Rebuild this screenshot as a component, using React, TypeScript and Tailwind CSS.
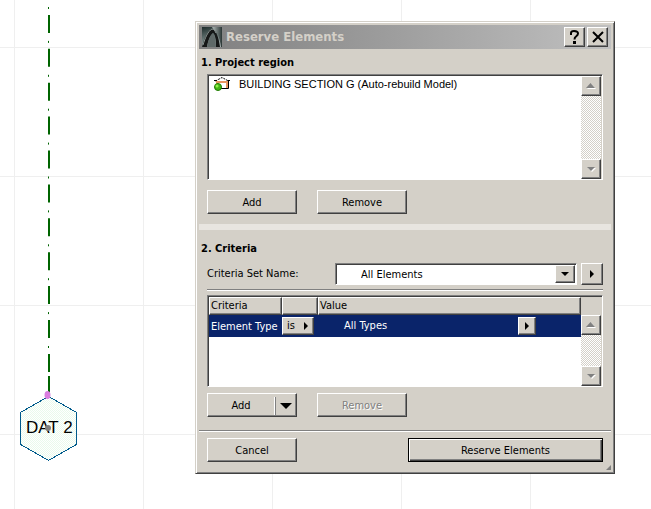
import React from "react";

const face =
  "bg-[#d4d0c8] border-t border-l border-t-white border-l-white border-b border-r border-b-[#404040] border-r-[#404040] shadow-[inset_-1px_-1px_0_#808080]";
const sunken =
  "border-t border-l border-t-[#808080] border-l-[#808080] border-b border-r border-b-white border-r-white bg-[#404040] pt-px pl-px";
const btn = "h-6 w-[90px] flex items-center justify-center pt-px";

const Arrow = ({ dir, color = "#000", lit = false }: { dir: string; color?: string; lit?: boolean }) => {
  const shapes: Record<string, string> = {
    up: "M0 6 L4.5 1 L9 6 Z",
    down: "M1 2 L9 2 L5 6 Z",
    right: "M3 0 L7 4 L3 8 Z",
  };
  return (
    <svg width="10" height="8" viewBox="0 0 10 8" aria-hidden="true">
      {lit && <path d={shapes[dir]} fill="#fff" transform="translate(1 1)" />}
      <path d={shapes[dir]} fill={color} />
    </svg>
  );
};

const ScrollBar = () => (
  <div className="flex w-5 flex-1 flex-col justify-between bg-[repeating-conic-gradient(#d4d0c8_0_25%,#fff_0_50%)] bg-size-[2px_2px]">
    <button aria-label="Scroll up" className={`${face} flex size-5 items-center justify-center`}>
      <Arrow dir="up" color="#808080" lit />
    </button>
    <button aria-label="Scroll down" className={`${face} flex size-5 items-center justify-center`}>
      <Arrow dir="down" color="#808080" lit />
    </button>
  </div>
);

const TitleIcon = () => (
  <svg width="20" height="20" viewBox="0 0 20 20" aria-hidden="true">
    <defs>
      <linearGradient id="sky" x1="0" y1="0" x2="0.3" y2="1">
        <stop offset="0" stopColor="#1d2b2a" />
        <stop offset="0.5" stopColor="#5c6c6b" />
        <stop offset="1" stopColor="#a9b3b2" />
      </linearGradient>
      <linearGradient id="shade" x1="0" y1="0" x2="1" y2="0">
        <stop offset="0" stopColor="#b4bcba" />
        <stop offset="1" stopColor="#2a3635" />
      </linearGradient>
    </defs>
    <rect width="20" height="20" fill="url(#sky)" />
    <path d="M12 3 C16 6 18 12 19 20 H20 V0 H10 Z" fill="url(#shade)" />
    <path d="M0 20 C2 12 5 4 10 2 C14 3 17 11 18 20 H14 C14 12 13 7 11 6 C8 8 6 14 5 20 Z" fill="#161818" />
    <path d="M1 18 C3 11 6 4 10 2 C12 2 13 4 14 6" fill="none" stroke="#8d9694" />
    <path d="M5 20 C6 14 8 8 11 6 C13 9 14 14 14 20 Z" fill="#5f6968" />
  </svg>
);

const HouseIcon = () => (
  <svg width="18" height="16" viewBox="0 0 18 16" aria-hidden="true">
    <path d="M2.5 5 L9 1.500 L15.500 5" fill="#fff" stroke="#000" strokeDasharray="2 1" />
    <path d="M4 13 V6 H14 V13" fill="#fff" stroke="#e8955f" strokeWidth="2" />
    <path d="M1 4.500 H3 M15 4.500 H17 M15.500 5 V12.500 H7" fill="none" stroke="#000" />
    <circle cx="5" cy="11" r="3.5" fill="#45b516" stroke="#1d7a00" />
    <circle cx="4" cy="10" r="1.500" fill="#8ff04a" />
  </svg>
);

const SectionMarker = () => (
  <svg width="80" height="465" viewBox="0 0 80 465" className="absolute top-0 left-0" role="img" aria-label="DAT 2">
    <defs>
      <pattern id="hatch" width="2" height="2" patternUnits="userSpaceOnUse">
        <rect width="2" height="2" fill="#fff" />
        <rect width="1" height="1" fill="#eafaec" />
        <rect x="1" y="1" width="1" height="1" fill="#eafaec" />
      </pattern>
    </defs>
    <path d="M49 -19 V373" stroke="#006400" strokeWidth="2" strokeDasharray="18 15.9" />
    <path d="M49 376 V393" stroke="#006400" strokeWidth="2" />
    <path d="M48.5 7 V373" stroke="#006400" strokeDasharray="2 31.9" />
    <path
      d="M48.5 396.5 L76.5 412.5 V444.5 L48.5 460.5 L20.5 444.5 V412.5 Z"
      fill="url(#hatch)"
      stroke="#005a8c"
      shapeRendering="crispEdges"
    />
    <text x="26" y="433" fontSize="17" className="font-['Liberation_Sans',sans-serif]" fill="#000">
      DAT 2
    </text>
    <ellipse cx="47.5" cy="395" rx="3" ry="4" fill="#da7fe0" />
    <circle cx="48" cy="428" r="3" fill="#808080" />
  </svg>
);

const Rule = () => <hr className="h-0.5 border-0 border-t border-t-[#808080] bg-white" />;

const App = () => {
  return (
    <main className="relative min-h-screen bg-white bg-[linear-gradient(to_right,#efefef_1px,transparent_1px),linear-gradient(to_bottom,#efefef_1px,transparent_1px)] bg-size-[129px_129px] bg-position-[14px_47px] pt-[21px] pr-9 pb-9 pl-[195px] font-['DejaVu_Sans_Condensed','Noto_Sans',sans-serif] text-[11px] leading-4 text-black">
      <SectionMarker />
      <section
        aria-labelledby="title"
        className="relative border border-t-[#d4d0c8] border-l-[#d4d0c8] border-r-[#404040] border-b-[#404040] bg-[#d4d0c8] p-[3px] pb-[11px] shadow-[inset_1px_1px_0_#fff,inset_-1px_-1px_0_#808080]"
      >
        <header className="flex h-6 items-center gap-1 bg-linear-to-r from-[#808080] to-[#c0c0c0] px-[3px]">
          <TitleIcon />
          <h1 id="title" className="flex-1 text-[13px] font-bold text-[#d4d0c8]">
            Reserve Elements
          </h1>
          <div className="flex gap-0.5">
            <button aria-label="Help" className={`${face} flex h-5 w-[21px] items-center justify-center`}>
              <svg width="11" height="14" viewBox="0 0 11 14" aria-hidden="true">
                <path d="M2 5 V3 Q2 1 5 1 Q9 1 9 3.5 Q9 5 7 6.5 Q5.5 7.5 5.5 9.5" fill="none" stroke="#000" strokeWidth="2" />
                <rect x="4" y="11" width="3" height="3" />
              </svg>
            </button>
            <button aria-label="Close" className={`${face} flex h-5 w-[21px] items-center justify-center`}>
              <svg width="12" height="12" viewBox="0 0 12 12" aria-hidden="true">
                <path d="M1 1 L11 11 M11 1 L1 11" stroke="#000" strokeWidth="2" />
              </svg>
            </button>
          </div>
        </header>

        <div className="px-2 pt-1.5 pb-[10px]">
          <h2 className="-ml-1.5 font-bold">1. Project region</h2>
          <div className={`${sunken} mt-[3px] flex h-[106px]`}>
            <ul className="flex-1 bg-white pl-1 font-['Liberation_Sans',sans-serif]">
              <li className="flex h-4 items-center gap-2">
                <HouseIcon />
                BUILDING SECTION G (Auto-rebuild Model)
              </li>
            </ul>
            <div className="flex bg-[#d4d0c8] pr-px">
              <ScrollBar />
            </div>
          </div>
          <div className="mt-[10px] flex gap-5">
            <button className={`${face} ${btn}`}>Add</button>
            <button className={`${face} ${btn}`}>Remove</button>
          </div>
        </div>
        <div className="h-1.5 bg-[#e8e5e0]" />

        <div className="px-2 pt-[11px] pb-3">
          <h2 className="-ml-1.5 font-bold">2. Criteria</h2>
          <div className="mt-1.5 flex items-center gap-1">
            <label htmlFor="set" className="w-[124px]">
              Criteria Set Name:
            </label>
            <div className={`${sunken} relative flex h-[22px] flex-1`}>
              <select id="set" className="w-full appearance-none bg-white pl-6 outline-none">
                <option>All Elements</option>
              </select>
              <span className={`${face} pointer-events-none absolute top-px right-px bottom-px flex w-5 items-center justify-center`}>
                <Arrow dir="down" />
              </span>
            </div>
            <button aria-label="Criteria set options" className={`${face} flex size-[22px] items-center justify-center`}>
              <Arrow dir="right" />
            </button>
          </div>
          <div className="mt-1 mb-1">
            <Rule />
          </div>
          <div className={`${sunken} flex h-[92px]`}>
            <div className="flex-1 bg-white">
              <table className="w-full table-fixed border-separate border-spacing-0 text-left">
                <thead>
                  <tr className="h-[18px]">
                    <th className={`${face} w-[73px] p-0 pl-px font-normal`}>Criteria</th>
                    <th className={`${face} w-9 p-0`} aria-label="Operator" />
                    <th className={`${face} p-0 pl-px font-normal`}>Value</th>
                  </tr>
                </thead>
                <tbody>
                  <tr className="h-[22px] bg-[#0a246a] text-white">
                    <td className="p-0 pt-px pl-0.5 whitespace-nowrap">Element Type</td>
                    <td className="p-0">
                      <button className={`${face} flex h-[18px] w-8 items-center justify-between pr-0.5 pl-1 text-black`}>
                        is
                        <Arrow dir="right" />
                      </button>
                    </td>
                    <td className="p-0 pr-[45px] pl-[26px]">
                      <div className="flex items-center justify-between">
                        All Types
                        <button aria-label="Choose value" className={`${face} flex size-[18px] items-center justify-center`}>
                          <Arrow dir="right" />
                        </button>
                      </div>
                    </td>
                  </tr>
                </tbody>
              </table>
            </div>
            <div className="flex flex-col bg-[#d4d0c8] pt-[18px] pr-px">
              <ScrollBar />
            </div>
          </div>
          <div className="mt-1.5 flex gap-5">
            <button className={`${face} ${btn}`}>
              <span className="flex-1">Add</span>
              <span className="flex h-[18px] w-[22px] items-center justify-center border-l border-l-white shadow-[inset_1px_0_0_#808080]">
                <svg width="12" height="6" viewBox="0 0 12 6" aria-hidden="true">
                  <path d="M0 0 H12 L6 6 Z" />
                </svg>
              </span>
            </button>
            <button disabled className={`${face} ${btn} text-[#808080] text-shadow-[1px_1px_0_#fff]`}>
              Remove
            </button>
          </div>
        </div>
        <div className="pt-px">
          <Rule />
        </div>

        <footer className="flex justify-between px-2 pt-1.5">
          <button className={`${face} ${btn}`}>Cancel</button>
          <button className="h-6 w-[195px] border border-black bg-[#d4d0c8] pt-px shadow-[inset_1px_1px_0_#fff,inset_-1px_-1px_0_#404040,inset_-2px_-2px_0_#808080]">
            Reserve Elements
          </button>
        </footer>
        <svg width="5" height="5" viewBox="0 0 5 5" className="absolute right-[3px] bottom-[3px]" aria-hidden="true">
          <path d="M5 0 V5 H0 Z" fill="#808080" />
        </svg>
      </section>
    </main>
  );
};

export default App;
